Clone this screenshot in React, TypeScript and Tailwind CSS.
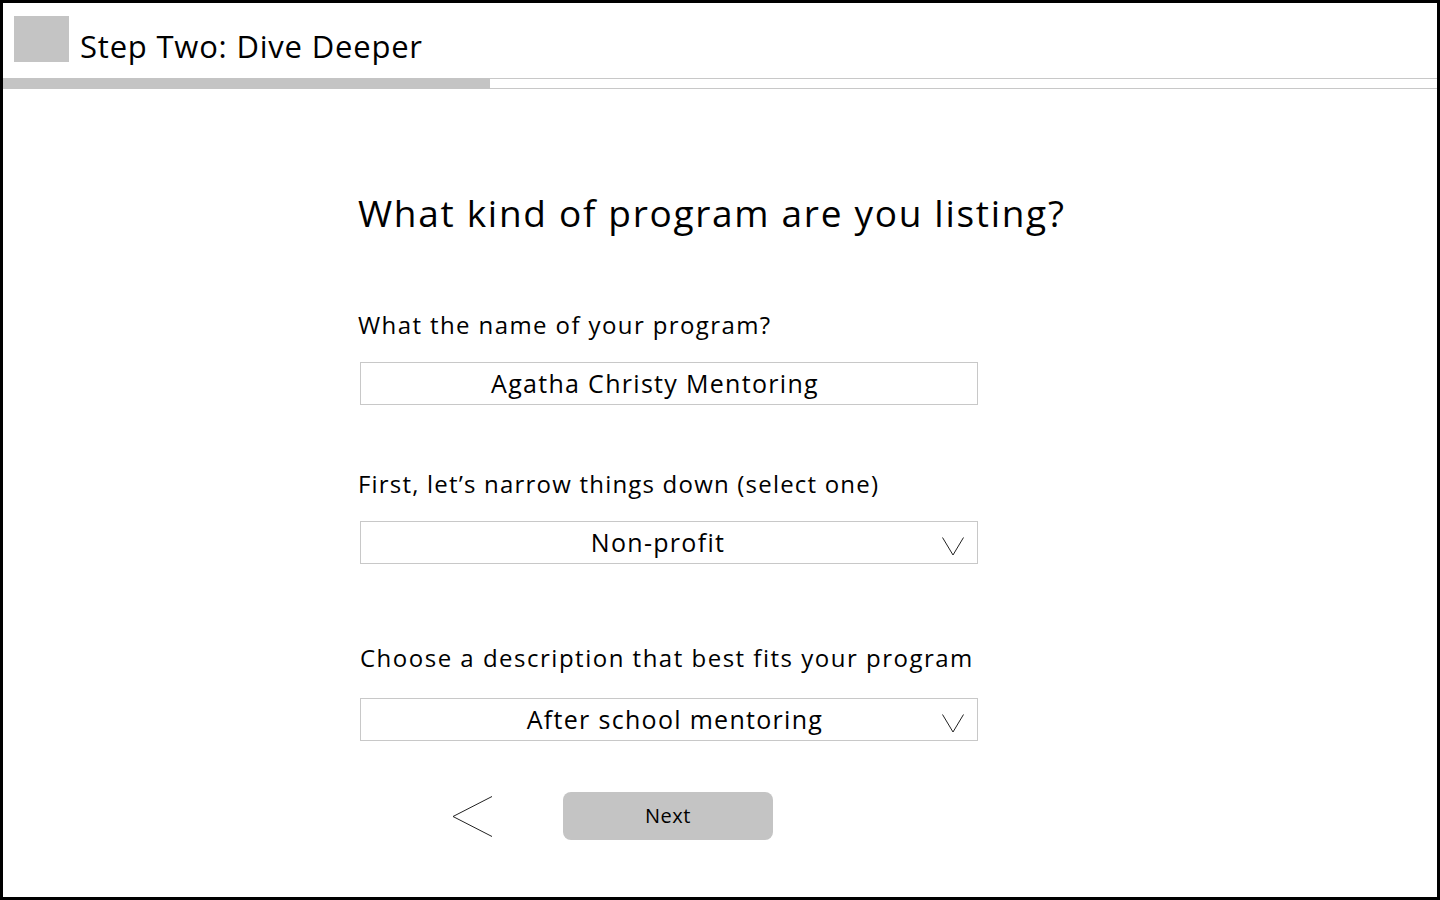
import React from 'react'

const font = { fontFamily: '"Open Sans", "Liberation Sans", sans-serif' }

function Chevron() {
  return (
    <svg width="22" height="19" viewBox="0 0 22 19" className="shrink-0">
      <polyline points="0.5,0.5 11,18 21.5,0.5" fill="none" stroke="#222" strokeWidth="1" />
    </svg>
  )
}

function Field({ value, select, shift = '' }: { value: string; select?: boolean; shift?: string }) {
  return (
    <div className={`relative flex h-[43px] w-[618px] items-center justify-center border border-[#c8c8c8] bg-white ml-[2px] ${shift}`}>
      <span className="text-[25px] leading-none tracking-[1.3px] text-black">{value}</span>
      {select && (
        <div className="absolute right-[13px] top-[15px]">
          <Chevron />
        </div>
      )}
    </div>
  )
}

export default function App() {
  return (
    <div style={font} className="flex h-[900px] w-[1440px] flex-col border-[3px] border-black bg-white text-black">
      <header className="flex h-[75px] items-start pl-[11px] pt-[13px]">
        <div className="h-[46px] w-[55px] bg-[#c4c4c4]" />
        <h1 className="ml-[11px] mt-[7px] text-[31px] leading-[46px] tracking-[0.8px]">Step Two: Dive Deeper</h1>
      </header>

      <div className="flex h-[11px] w-full">
        <div className="h-full w-[487px] bg-[#c4c4c4]" />
        <div className="h-full flex-1 border-y border-[#c8c8c8]" />
      </div>

      <main className="flex flex-col pl-[355px]">
        <h2 className="mt-[102px] text-[37px] leading-[44px] tracking-[1.7px]">What kind of program are you listing?</h2>

        <label className="mt-[75px] text-[24px] leading-[30px] tracking-[1.4px]">What the name of your program?</label>
        <div className="mt-[22px]">
          <Field value="Agatha Christy Mentoring" shift="pr-[28px]" />
        </div>

        <label className="mt-[64px] text-[24px] leading-[30px] tracking-[1.2px]">First, let’s narrow things down (select one)</label>
        <div className="mt-[22px]">
          <Field value="Non-profit" select shift="pr-[22px]" />
        </div>

        <label className="mt-[79px] pl-[2px] text-[24px] leading-[30px] tracking-[1.5px]">Choose a description that best fits your program</label>
        <div className="mt-[25px]">
          <Field value="After school mentoring" select shift="pl-[12px]" />
        </div>

        <div className="mt-[51px] flex items-center pl-[94px]">
          <button className="flex h-[48px] w-[41px] items-center justify-center">
            <svg width="41" height="41" viewBox="0 0 41 41">
              <polyline points="40,0.5 1,20.5 40,40.5" fill="none" stroke="#222" strokeWidth="1" />
            </svg>
          </button>
          <button className="ml-[70px] h-[48px] w-[210px] rounded-[8px] bg-[#c4c4c4] text-[20px] tracking-[0.5px] text-black">
            Next
          </button>
        </div>
      </main>
    </div>
  )
}
